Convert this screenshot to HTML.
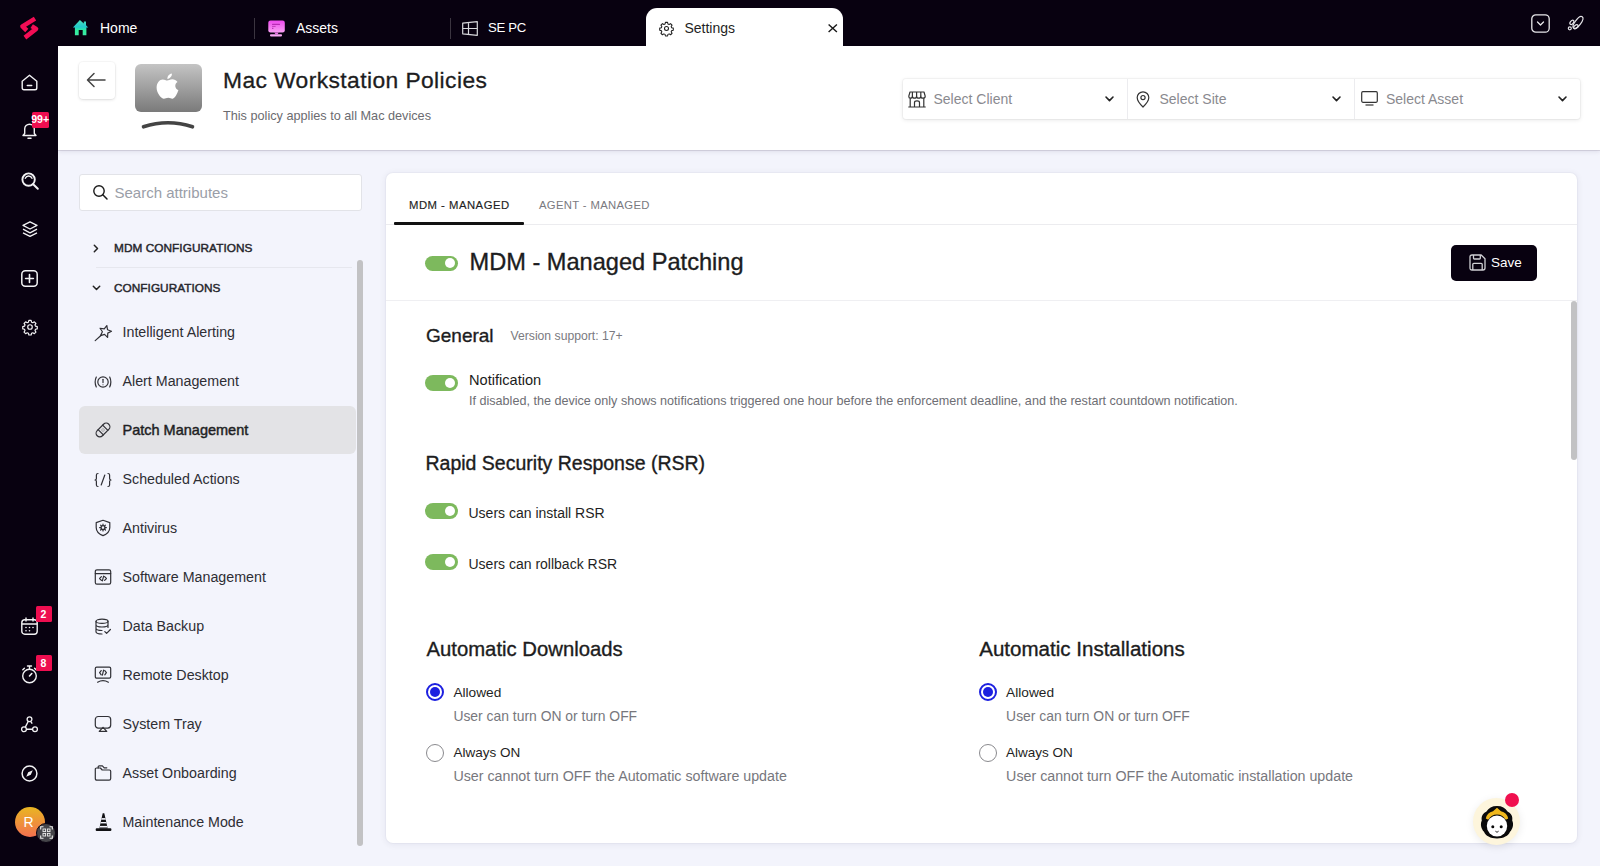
<!DOCTYPE html>
<html><head><meta charset="utf-8">
<style>
*{box-sizing:border-box;margin:0;padding:0}
html,body{width:1600px;height:866px;overflow:hidden;background:#f3f4fc;font-family:"Liberation Sans",sans-serif;color:#1f1f24}
.a{position:absolute}
.t{position:absolute;white-space:nowrap;line-height:1}
svg{position:absolute;overflow:visible}
#rail{left:0;top:0;width:58px;height:866px;background:#080110}
#top{left:0;top:0;width:1600px;height:46.5px;background:#080110}
#hdr{left:58px;top:46px;width:1542px;height:103.5px;background:#fff;box-shadow:0 1px 0 rgba(60,50,80,.13),0 2px 4px rgba(60,50,90,.10)}
</style></head><body>
<div id="top" class="a"></div>
<div id="rail" class="a"></div>
<div id="hdr" class="a"></div>

<!-- TOP BAR -->
<svg style="left:72px;top:19px" width="17" height="17" viewBox="0 0 17 17">
 <defs><linearGradient id="gh" x1="0" y1="0" x2="0" y2="1"><stop offset="0" stop-color="#4be0b8"/><stop offset="0.45" stop-color="#22c8cc"/><stop offset="0.7" stop-color="#2ff09a"/><stop offset="1" stop-color="#3ee8a8"/></linearGradient></defs>
 <path d="M7.9 1 L11.8 4.4 V2.6 H14 V6.3 L16.2 8.4 L14.4 8.4 L14.4 16.2 L10.7 16.2 L10.7 11 L6.7 11 L6.7 16.2 L2.9 16.2 L2.9 8.4 L0.9 8.4 Z" fill="url(#gh)"/>
</svg>
<div class="t" style="left:100px;top:21.4px;font-size:14px;color:#fff">Home</div>
<div class="a" style="left:254px;top:18px;width:1px;height:21px;background:#3b3540"></div>
<svg style="left:268px;top:19.5px" width="17" height="17" viewBox="0 0 17 17">
 <defs><linearGradient id="ga" x1="0" y1="0" x2="0" y2="1"><stop offset="0" stop-color="#ee48ee"/><stop offset="1" stop-color="#f8a0f2"/></linearGradient></defs>
 <rect x="0.3" y="0.5" width="16.5" height="12" rx="2.2" fill="url(#ga)"/>
 <rect x="4" y="3.7" width="8" height="1.4" rx=".5" fill="#b82cb4"/><rect x="4" y="5.9" width="3.6" height="1" fill="#c23cbc"/><rect x="4" y="7.8" width="1.4" height="1.1" fill="#b82cb4"/>
 <path d="M6.3 12.5 H10.7 L9.6 14.2 H7.4 Z" fill="#f070ec"/><rect x="2" y="14.2" width="12" height="2.2" rx=".8" fill="#f8a8f4"/>
</svg>
<div class="t" style="left:296px;top:21.4px;font-size:14px;color:#fff">Assets</div>
<div class="a" style="left:450px;top:18px;width:1px;height:21px;background:#3b3540"></div>
<svg style="left:462px;top:20.5px" width="16" height="15" viewBox="0 0 16 15">
 <path d="M0.7 2.2 L15.3 0.7 L15.3 14.3 L0.7 12.8 Z M0.7 7.5 H15.3 M6.5 1.6 V13.4" fill="none" stroke="#d8d8dc" stroke-width="1.2" stroke-linejoin="round"/>
</svg>
<div class="t" style="left:488px;top:21.4px;font-size:13.2px;color:#fff;letter-spacing:-0.35px">SE PC</div>
<div class="a" style="left:646px;top:8px;width:197px;height:39px;background:#fff;border-radius:11px 11px 0 0"></div>
<svg style="left:658.5px;top:21px" width="15" height="15" viewBox="0 0 24 24">
 <path d="M10.3 2.2h3.4l.6 2.6 1.9.8 2.3-1.4 2.4 2.4-1.4 2.3.8 1.9 2.6.6v3.4l-2.6.6-.8 1.9 1.4 2.3-2.4 2.4-2.3-1.4-1.9.8-.6 2.6h-3.4l-.6-2.6-1.9-.8-2.3 1.4-2.4-2.4 1.4-2.3-.8-1.9-2.6-.6v-3.4l2.6-.6.8-1.9-1.4-2.3 2.4-2.4 2.3 1.4 1.9-.8z" fill="none" stroke="#222" stroke-width="1.7" stroke-linejoin="round"/>
 <circle cx="12" cy="12" r="3.2" fill="none" stroke="#222" stroke-width="1.7"/>
</svg>
<div class="t" style="left:684.4px;top:20.9px;font-size:14px;color:#1f1f24">Settings</div>
<svg style="left:827.5px;top:24px" width="9.5" height="8.5" viewBox="0 0 9.5 8.5">
 <path d="M0.6 0.4 L8.9 8.1 M8.9 0.4 L0.6 8.1" stroke="#1a1a1a" stroke-width="1.4"/>
</svg>
<svg style="left:1531px;top:14px" width="19" height="19" viewBox="0 0 19 19">
 <rect x="0.8" y="0.8" width="17.4" height="17.4" rx="4" fill="none" stroke="#e8e8ea" stroke-width="1.3"/>
 <path d="M6.5 8 L9.5 11 L12.5 8" fill="none" stroke="#e8e8ea" stroke-width="1.3" stroke-linecap="round" stroke-linejoin="round"/>
</svg>
<svg style="left:1565px;top:13px" width="20" height="18" viewBox="0 0 20 18">
 <ellipse cx="13" cy="9.5" rx="7.2" ry="2.9" transform="rotate(-54 13 9.5)" fill="none" stroke="#e4e4e8" stroke-width="1.2"/>
 <ellipse cx="6.9" cy="9.3" rx="1.5" ry="2.5" transform="rotate(40 6.9 9.3)" fill="none" stroke="#e4e4e8" stroke-width="1.2"/>
 <ellipse cx="10.9" cy="13.7" rx="1.5" ry="2.5" transform="rotate(52 10.9 13.7)" fill="none" stroke="#e4e4e8" stroke-width="1.2"/>
 <circle cx="4.8" cy="15.3" r="1.5" fill="none" stroke="#e4e4e8" stroke-width="1.2"/>
</svg>


<!-- HEADER -->
<div class="a" style="left:78.5px;top:62px;width:36px;height:37px;background:#fff;border-radius:4px;box-shadow:0 1px 3px rgba(0,0,0,.12),0 0 0 1px rgba(0,0,0,.025)"></div>
<svg style="left:86px;top:72px" width="20" height="16" viewBox="0 0 20 16">
 <path d="M19 8 H1.6 M8 1.5 L1.5 8 L8 14.5" fill="none" stroke="#444" stroke-width="1.5" stroke-linecap="round" stroke-linejoin="round"/>
</svg>
<div class="a" style="left:134.5px;top:64px;width:67px;height:47.5px;border-radius:6px;background:linear-gradient(#c4c4c4,#7a7a7a)"></div>
<svg style="left:156px;top:72.5px" width="23" height="28" viewBox="0 0 23 28">
 <path d="M11.2 7.6 C12.6 7.6 13.9 6.3 16.4 6.3 C18.2 6.3 20.2 7.2 21.5 9 C18.3 10.8 18.6 15.6 22.4 17.1 C21.6 19.6 19.2 25.6 16.6 25.7 C15 25.8 14.4 24.8 12.3 24.8 C10.2 24.8 9.5 25.8 7.9 25.8 C5.3 25.8 0.6 20 0.6 14.8 C0.6 9.5 3.8 6.4 6.7 6.4 C8.7 6.4 9.9 7.6 11.2 7.6 Z" fill="#fff"/>
 <path d="M11.4 5.9 C11.2 3.4 13.3 0.9 15.9 0.6 C16.2 3.2 13.8 6 11.4 5.9 Z" fill="#fff"/>
</svg>
<svg style="left:141px;top:120px" width="54" height="9" viewBox="0 0 54 9">
 <path d="M2.5 6.8 Q27 -1.2 51.5 6.8" fill="none" stroke="#444" stroke-width="3.6" stroke-linecap="round"/>
</svg>
<div class="t" style="left:223px;top:68.5px;font-size:22.8px;letter-spacing:0.42px;color:#1c1c20;-webkit-text-stroke:0.3px #1c1c20">Mac Workstation Policies</div>
<div class="t" style="left:223px;top:110px;font-size:12.7px;color:#6b6b70">This policy applies to all Mac devices</div>

<div class="a" style="left:902.5px;top:79px;width:677px;height:40px;background:#fff;border-radius:3px;box-shadow:0 1px 4px rgba(0,0,0,.10),0 0 0 1px rgba(0,0,0,.03)"></div>
<div class="a" style="left:1127px;top:79px;width:1px;height:40px;background:#ececef"></div>
<div class="a" style="left:1353.5px;top:79px;width:1px;height:40px;background:#ececef"></div>
<svg style="left:907.5px;top:90.5px" width="18" height="17" viewBox="0 0 18 17">
 <path d="M2 1 H16 L17.2 5.2 Q17.2 7.2 14.9 7.2 Q12.8 7.2 12.8 5.2 Q12.8 7.2 10.7 7.2 Q8.6 7.2 8.6 5.2 Q8.6 7.2 6.5 7.2 Q4.4 7.2 4.4 5.2 Q4.4 7.2 2.2 7.2 Q0.8 7.2 0.8 5.2 Z" fill="none" stroke="#333" stroke-width="1.2" stroke-linejoin="round"/>
 <path d="M2.2 7.2 V16 M15.8 7.2 V16 M0.3 16 H17.7 M6.5 16 V11.5 Q6.5 9.8 9 9.8 Q11.5 9.8 11.5 11.5 V16 M4.4 1 V5.2 M8.6 1 V5.2 M12.8 1 V5.2" fill="none" stroke="#333" stroke-width="1.2"/>
</svg>
<div class="t" style="left:933.5px;top:91.9px;font-size:14px;color:#8a8a8f">Select Client</div>
<svg style="left:1105px;top:96px" width="9" height="6" viewBox="0 0 9 6"><path d="M1 1 L4.5 4.6 L8 1" fill="none" stroke="#222" stroke-width="1.6" stroke-linecap="round" stroke-linejoin="round"/></svg>
<svg style="left:1136px;top:90.5px" width="14" height="17" viewBox="0 0 14 17">
 <path d="M7 16 C7 16 12.8 10.6 12.8 6.6 A5.8 5.8 0 0 0 1.2 6.6 C1.2 10.6 7 16 7 16 Z" fill="none" stroke="#333" stroke-width="1.2" stroke-linejoin="round"/>
 <circle cx="7" cy="6.6" r="2.1" fill="none" stroke="#333" stroke-width="1.2"/>
</svg>
<div class="t" style="left:1159.5px;top:91.9px;font-size:14px;color:#8a8a8f">Select Site</div>
<svg style="left:1331.5px;top:96px" width="9" height="6" viewBox="0 0 9 6"><path d="M1 1 L4.5 4.6 L8 1" fill="none" stroke="#222" stroke-width="1.6" stroke-linecap="round" stroke-linejoin="round"/></svg>
<svg style="left:1361px;top:91px" width="17" height="15" viewBox="0 0 17 15">
 <rect x="0.7" y="0.7" width="15.6" height="10.6" rx="1.2" fill="none" stroke="#333" stroke-width="1.2"/>
 <path d="M4.5 14 H12.5" stroke="#333" stroke-width="1.2"/>
</svg>
<div class="t" style="left:1386px;top:91.9px;font-size:14px;color:#8a8a8f">Select Asset</div>
<svg style="left:1558px;top:96px" width="9" height="6" viewBox="0 0 9 6"><path d="M1 1 L4.5 4.6 L8 1" fill="none" stroke="#222" stroke-width="1.6" stroke-linecap="round" stroke-linejoin="round"/></svg>


<!-- LEFT PANEL -->
<div class="a" style="left:78.5px;top:174px;width:283.5px;height:36.5px;background:#fff;border:1px solid #e2e3e8;border-radius:3px"></div>
<svg style="left:92.5px;top:185px" width="15" height="15" viewBox="0 0 15 15">
 <circle cx="6" cy="6" r="5.2" fill="none" stroke="#1a1a1a" stroke-width="1.4"/>
 <path d="M9.8 9.8 L14 14" stroke="#1a1a1a" stroke-width="1.5" stroke-linecap="round"/>
</svg>
<div class="t" style="left:114.5px;top:184.6px;font-size:15px;color:#9a9ea8">Search attributes</div>
<svg style="left:92.5px;top:244px" width="6" height="9" viewBox="0 0 6 9"><path d="M1.3 1.3 L4.5 4.5 L1.3 7.7" fill="none" stroke="#222" stroke-width="1.5" stroke-linecap="round" stroke-linejoin="round"/></svg>
<div class="t" style="left:114px;top:243px;font-size:11.8px;color:#26262c;-webkit-text-stroke:0.45px #26262c;letter-spacing:0.06px">MDM CONFIGURATIONS</div>
<div class="a" style="left:96px;top:267px;width:256px;height:1px;background:#e6e7ee"></div>
<svg style="left:91.5px;top:285px" width="9" height="6" viewBox="0 0 9 6"><path d="M1.3 1.3 L4.5 4.5 L7.7 1.3" fill="none" stroke="#222" stroke-width="1.5" stroke-linecap="round" stroke-linejoin="round"/></svg>
<div class="t" style="left:114px;top:282.8px;font-size:11.8px;color:#26262c;-webkit-text-stroke:0.45px #26262c;letter-spacing:0.04px">CONFIGURATIONS</div>
<div class="a" style="left:357px;top:260px;width:5.5px;height:586px;background:#c2c2c4;border-radius:3px"></div>
<div class="a" style="left:79px;top:406px;width:277px;height:48px;background:#e3e3e6;border-radius:6px"></div>
<div class="t" style="left:122.5px;top:325.23px;font-size:14.25px;color:#2e2e34">Intelligent Alerting</div>
<div class="t" style="left:122.5px;top:374.18px;font-size:14.25px;color:#2e2e34">Alert Management</div>
<div class="t" style="left:122.5px;top:422.92px;font-size:14.5px;color:#1f1f24;-webkit-text-stroke:0.45px #1f1f24">Patch Management</div>
<div class="t" style="left:122.5px;top:472.08px;font-size:14.25px;color:#2e2e34">Scheduled Actions</div>
<div class="t" style="left:122.5px;top:521.03px;font-size:14.25px;color:#2e2e34">Antivirus</div>
<div class="t" style="left:122.5px;top:569.98px;font-size:14.25px;color:#2e2e34">Software Management</div>
<div class="t" style="left:122.5px;top:618.93px;font-size:14.25px;color:#2e2e34">Data Backup</div>
<div class="t" style="left:122.5px;top:667.88px;font-size:14.25px;color:#2e2e34">Remote Desktop</div>
<div class="t" style="left:122.5px;top:716.83px;font-size:14.25px;color:#2e2e34">System Tray</div>
<div class="t" style="left:122.5px;top:765.78px;font-size:14.25px;color:#2e2e34">Asset Onboarding</div>
<div class="t" style="left:122.5px;top:814.73px;font-size:14.25px;color:#2e2e34">Maintenance Mode</div>


<!-- MENU ICONS -->
<svg style="left:93.5px;top:324px" width="18" height="18" viewBox="0 0 18 18"><path d="M12.83 1.59 L13.53 5.75 L17.49 7.20 L13.75 9.15 L13.59 13.36 L10.58 10.41 L6.53 11.56 L8.41 7.79 L6.06 4.28 L10.23 4.91 Z" fill="none" stroke="#303036" stroke-width="1.2" stroke-linecap="round" stroke-linejoin="round"/><path d="M7.2 11.2 L1.2 16.6" fill="none" stroke="#303036" stroke-width="1.2" stroke-linecap="round" stroke-linejoin="round"/></svg>
<svg style="left:93.5px;top:372.5px" width="18" height="18" viewBox="0 0 18 18"><circle cx="9" cy="9" r="5.2" fill="none" stroke="#303036" stroke-width="1.2" stroke-linecap="round" stroke-linejoin="round"/><path d="M9 6.3 V9.6" fill="none" stroke="#303036" stroke-width="1.2" stroke-linecap="round" stroke-linejoin="round"/><circle cx="9" cy="11.7" r=".55" fill="#303036"/><path d="M2.3 4 Q0 9 2.3 14 M15.7 4 Q18 9 15.7 14" fill="none" stroke="#303036" stroke-width="1.2" stroke-linecap="round" stroke-linejoin="round"/></svg>
<svg style="left:93.5px;top:421px" width="18" height="18" viewBox="0 0 18 18"><g transform="rotate(-45 9 9)"><rect x="0.8" y="5.3" width="16.4" height="7.4" rx="3.7" fill="none" stroke="#303036" stroke-width="1.2" stroke-linecap="round" stroke-linejoin="round"/><path d="M5.8 5.3 V12.7 M12.2 5.3 V12.7" fill="none" stroke="#303036" stroke-width="1.2" stroke-linecap="round" stroke-linejoin="round"/><circle cx="8.2" cy="8.2" r=".45" fill="#303036"/><circle cx="9.8" cy="9.8" r=".45" fill="#303036"/><circle cx="9.8" cy="8.2" r=".45" fill="#303036"/><circle cx="8.2" cy="9.8" r=".45" fill="#303036"/></g></svg>
<svg style="left:93.5px;top:470.5px" width="18" height="18" viewBox="0 0 18 18"><path d="M4 2.5 Q2.4 2.5 2.4 4 V7.6 Q2.4 9 1 9 Q2.4 9 2.4 10.4 V14 Q2.4 15.5 4 15.5 M14 2.5 Q15.6 2.5 15.6 4 V7.6 Q15.6 9 17 9 Q15.6 9 15.6 10.4 V14 Q15.6 15.5 14 15.5 M10.8 4 L7.2 14" fill="none" stroke="#303036" stroke-width="1.2" stroke-linecap="round" stroke-linejoin="round"/></svg>
<svg style="left:93.5px;top:519.4px" width="18" height="18" viewBox="0 0 18 18"><path d="M9 1.3 L15.8 3.6 V8.4 Q15.8 13.8 9 16.6 Q2.2 13.8 2.2 8.4 V3.6 Z" fill="none" stroke="#303036" stroke-width="1.2" stroke-linecap="round" stroke-linejoin="round"/><circle cx="9" cy="8.6" r="2" fill="none" stroke="#303036" stroke-width="1.2" stroke-linecap="round" stroke-linejoin="round"/><path d="M9 5.2 V6.6 M9 10.6 V12 M5.6 8.6 H7 M11 8.6 H12.4 M6.6 6.2 L7.6 7.2 M10.4 10 L11.4 11 M11.4 6.2 L10.4 7.2 M7.6 10 L6.6 11" fill="none" stroke="#303036" stroke-width="1.2" stroke-linecap="round" stroke-linejoin="round"/></svg>
<svg style="left:93.5px;top:568.3px" width="18" height="18" viewBox="0 0 18 18"><rect x="1.3" y="1.8" width="15.4" height="14.4" rx="1.6" fill="none" stroke="#303036" stroke-width="1.2" stroke-linecap="round" stroke-linejoin="round"/><path d="M1.3 5.6 H16.7 M7.4 8.6 L5.6 10.5 L7.4 12.4 M10.6 8.6 L12.4 10.5 L10.6 12.4 M9.6 8.2 L8.4 12.8" fill="none" stroke="#303036" stroke-width="1.2" stroke-linecap="round" stroke-linejoin="round"/></svg>
<svg style="left:93.5px;top:617.7px" width="18" height="18" viewBox="0 0 18 18"><ellipse cx="8" cy="3.3" rx="6" ry="2.1" fill="none" stroke="#303036" stroke-width="1.2" stroke-linecap="round" stroke-linejoin="round"/><path d="M2 3.3 V13.8 Q2 16 8 16 M14 3.3 V9.5 M2 6.8 Q2 9 8 9 Q14 9 14 6.8 M2 10.3 Q2 12.5 8 12.5" fill="none" stroke="#303036" stroke-width="1.2" stroke-linecap="round" stroke-linejoin="round"/><path d="M10.8 13.6 L12.6 15.3 L16.4 11.5" fill="none" stroke="#303036" stroke-width="1.2" stroke-linecap="round" stroke-linejoin="round"/></svg>
<svg style="left:93.5px;top:665.7px" width="18" height="18" viewBox="0 0 18 18"><rect x="1.3" y="1.2" width="15.4" height="11" rx="1.4" fill="none" stroke="#303036" stroke-width="1.2" stroke-linecap="round" stroke-linejoin="round"/><path d="M7.2 4.6 L5.6 6.7 L7.2 8.8 M10.8 4.6 L12.4 6.7 L10.8 8.8 M9.6 4.2 L8.4 9.2 M3.6 16.2 Q9 13.2 14.4 16.2" fill="none" stroke="#303036" stroke-width="1.2" stroke-linecap="round" stroke-linejoin="round"/></svg>
<svg style="left:93.5px;top:715.2px" width="18" height="18" viewBox="0 0 18 18"><rect x="1.3" y="1.5" width="15.4" height="11.6" rx="3" fill="none" stroke="#303036" stroke-width="1.2" stroke-linecap="round" stroke-linejoin="round"/><path d="M5.2 16.3 L9 12.3 L12.8 16.3 Z" fill="#fff" stroke="#303036" stroke-width="1.2" stroke-linecap="round" stroke-linejoin="round"/></svg>
<svg style="left:93.5px;top:764.2px" width="18" height="18" viewBox="0 0 18 18"><path d="M1.3 14.6 V5.2 Q1.3 4 2.5 4 H6.4 L8.2 6 H15.4 Q16.7 6 16.7 7.3 V14.6 Q16.7 16.2 15.1 16.2 H2.9 Q1.3 16.2 1.3 14.6 Z" fill="none" stroke="#303036" stroke-width="1.2" stroke-linecap="round" stroke-linejoin="round"/><path d="M4.2 4 V2.8 Q4.2 1.8 5.2 1.8 H8.4 L10.2 3.8 H12.8" fill="none" stroke="#303036" stroke-width="1.2" stroke-linecap="round" stroke-linejoin="round"/></svg>
<svg style="left:93.5px;top:812.7px" width="18" height="18" viewBox="0 0 18 18"><defs><clipPath id="cone"><path d="M8.7 0.2 H10.3 L13.7 15.6 H5.3 Z"/></clipPath></defs><g clip-path="url(#cone)"><rect x="0" y="0" width="18" height="16" fill="#111114"/><rect x="0" y="5.1" width="18" height="1.6" fill="#f3f4fc"/><rect x="0" y="9" width="18" height="1.4" fill="#f3f4fc"/><rect x="0" y="12.9" width="18" height="1.6" fill="#f3f4fc"/></g><rect x="1.7" y="15.3" width="15.7" height="2.6" rx="1" fill="#111114"/></svg>


<!-- CARD -->
<div class="a" style="left:385.5px;top:172.5px;width:1191.5px;height:670px;background:#fff;border-radius:7px;box-shadow:0 0 0 1px rgba(20,20,60,.025),0 1px 6px 1px rgba(20,20,60,.06)"></div>
<div class="t" style="left:409px;top:199.88px;font-size:11.3px;color:#1f1f24;letter-spacing:0.5px;-webkit-text-stroke:0.15px #1f1f24">MDM - MANAGED</div>
<div class="t" style="left:539px;top:199.88px;font-size:11.3px;color:#7a7a80;letter-spacing:0.33px">AGENT - MANAGED</div>
<div class="a" style="left:385.5px;top:224px;width:1191.5px;height:1px;background:#ececef"></div>
<div class="a" style="left:394px;top:222px;width:130px;height:2.5px;background:#111;border-radius:1px"></div>
<div class="a" style="left:425px;top:255.5px;width:33px;height:15.5px;border-radius:8px;background:#7db95d"></div>
<div class="a" style="left:444.5px;top:258.25px;width:10px;height:10px;border-radius:50%;background:#fff"></div>
<div class="t" style="left:469.5px;top:251.02px;font-size:23.6px;color:#1c1c20;-webkit-text-stroke:0.35px currentColor;">MDM - Managed Patching</div>
<div class="a" style="left:1451px;top:244.5px;width:86px;height:36px;background:#080110;border-radius:5px"></div>
<svg style="left:1468.5px;top:254px" width="17" height="17" viewBox="0 0 17 17">
 <path d="M1 3 Q1 1 3 1 H12.2 L16 4.8 V14 Q16 16 14 16 H3 Q1 16 1 14 Z" fill="none" stroke="#d0d0d4" stroke-width="1.3" stroke-linejoin="round"/>
 <path d="M4.5 1 V4.2 Q4.5 5 5.3 5 H10.5 Q11.3 5 11.3 4.2 V1 M3.8 16 V10.3 Q3.8 9.3 4.8 9.3 H12.2 Q13.2 9.3 13.2 10.3 V16" fill="none" stroke="#d0d0d4" stroke-width="1.3"/>
</svg>
<div class="t" style="left:1491px;top:255.57px;font-size:13.5px;color:#fff;">Save</div>
<div class="a" style="left:385.5px;top:300px;width:1191.5px;height:1px;background:#efeff2"></div>
<div class="a" style="left:1571px;top:301px;width:5.5px;height:159px;background:#c2c2c4;border-radius:3px"></div>
<div class="t" style="left:426px;top:326.11px;font-size:19px;color:#1c1c20;-webkit-text-stroke:0.35px currentColor;">General</div>
<div class="t" style="left:510.5px;top:329.67px;font-size:12.2px;color:#7a7a80;">Version support: 17+</div>
<div class="a" style="left:425px;top:375.2px;width:33px;height:15.5px;border-radius:8px;background:#7db95d"></div>
<div class="a" style="left:444.5px;top:377.95px;width:10px;height:10px;border-radius:50%;background:#fff"></div>
<div class="t" style="left:469px;top:372.94px;font-size:14.6px;color:#1c1c20;">Notification</div>
<div class="t" style="left:469px;top:395.13px;font-size:12.6px;color:#6e6e74;">If disabled, the device only shows notifications triggered one hour before the enforcement deadline, and the restart countdown notification.</div>
<div class="t" style="left:425.5px;top:453.89px;font-size:19.5px;color:#1c1c20;-webkit-text-stroke:0.35px currentColor;">Rapid Security Response (RSR)</div>
<div class="a" style="left:425px;top:503px;width:33px;height:15.5px;border-radius:8px;background:#7db95d"></div>
<div class="a" style="left:444.5px;top:505.75px;width:10px;height:10px;border-radius:50%;background:#fff"></div>
<div class="t" style="left:468.5px;top:505.65px;font-size:14px;color:#1f1f24;">Users can install RSR</div>
<div class="a" style="left:425px;top:554px;width:33px;height:15.5px;border-radius:8px;background:#7db95d"></div>
<div class="a" style="left:444.5px;top:556.75px;width:10px;height:10px;border-radius:50%;background:#fff"></div>
<div class="t" style="left:468.5px;top:556.65px;font-size:14px;color:#1f1f24;">Users can rollback RSR</div>
<div class="t" style="left:426.5px;top:638.81px;font-size:20.3px;color:#1c1c20;-webkit-text-stroke:0.35px currentColor;">Automatic Downloads</div>
<div class="a" style="left:425.8px;top:683px;width:18px;height:18px;border-radius:50%;border:2px solid #1d20e0;background:#fff"></div>
<div class="a" style="left:429.8px;top:687px;width:10px;height:10px;border-radius:50%;background:#1d20e0"></div>
<div class="t" style="left:453.4px;top:685.9px;font-size:13.7px;color:#1f1f24;">Allowed</div>
<div class="t" style="left:453.4px;top:710.03px;font-size:13.9px;color:#77777d;">User can turn ON or turn OFF</div>
<div class="a" style="left:425.8px;top:744px;width:18px;height:18px;border-radius:50%;border:1.5px solid #8a8a8e;background:#fff"></div>
<div class="t" style="left:453.4px;top:746.07px;font-size:13.5px;color:#1f1f24;">Always ON</div>
<div class="t" style="left:453.4px;top:768.53px;font-size:14.25px;color:#77777d;">User cannot turn OFF the Automatic software update</div>
<div class="t" style="left:979.2px;top:638.60px;font-size:20.55px;color:#1c1c20;-webkit-text-stroke:0.35px currentColor;">Automatic Installations</div>
<div class="a" style="left:978.5px;top:683px;width:18px;height:18px;border-radius:50%;border:2px solid #1d20e0;background:#fff"></div>
<div class="a" style="left:982.5px;top:687px;width:10px;height:10px;border-radius:50%;background:#1d20e0"></div>
<div class="t" style="left:1006.1px;top:685.9px;font-size:13.7px;color:#1f1f24;">Allowed</div>
<div class="t" style="left:1006.1px;top:710.03px;font-size:13.9px;color:#77777d;">User can turn ON or turn OFF</div>
<div class="a" style="left:978.5px;top:744px;width:18px;height:18px;border-radius:50%;border:1.5px solid #8a8a8e;background:#fff"></div>
<div class="t" style="left:1006.1px;top:746.07px;font-size:13.5px;color:#1f1f24;">Always ON</div>
<div class="t" style="left:1006.1px;top:768.53px;font-size:14.25px;color:#77777d;">User cannot turn OFF the Automatic installation update</div>
<div class="a" style="left:1473px;top:797.5px;width:47px;height:47px;border-radius:50%;background:#fdf5dc;box-shadow:0 2px 8px rgba(0,0,0,.08)"></div>
<svg style="left:1478px;top:803px" width="38" height="38" viewBox="0 0 38 38">
 <path d="M19 3 C24 3 27.5 5 29.5 8.5 C33 10 35 13.5 34.2 17.5 C36 21 34.8 26 32 28.8 C30.5 32.8 25.5 35.5 19 35.5 C12.5 35.5 7.5 32.8 6 28.8 C3.2 26 2 21 3.8 17.5 C3 13.5 5 10 8.5 8.5 C10.5 5 14 3 19 3 Z" fill="#0a0a0a"/>
 <path d="M7.8 15.5 Q9 9.5 15 8.2 L19 4.8 L23 8.2 Q29 9.5 30.2 15.5 L27.8 16.8 Q24.5 11.5 19 11.5 Q13.5 11.5 10.2 16.8 Z" fill="#f0b81c"/>
 <ellipse cx="19" cy="23" rx="10.2" ry="10.6" fill="#fff"/>
 <circle cx="14.8" cy="23.8" r="1.5" fill="#0a0a0a"/><circle cx="23.2" cy="23.8" r="1.5" fill="#0a0a0a"/>
 <path d="M17.4 28.2 L19 29.3 L20.6 28.2" fill="none" stroke="#0a0a0a" stroke-width="0.9"/>
</svg>
<div class="a" style="left:1504.5px;top:793px;width:14px;height:14px;border-radius:50%;background:#f0104f"></div>

<!-- RAIL -->
<svg style="left:17px;top:14px" width="26" height="28" viewBox="0 0 26 28">
 <path d="M18 4.6 L5.4 12.4 L9.8 16.5" fill="none" stroke="#f30d55" stroke-width="4.5" stroke-linejoin="round"/>
 <path d="M14.7 12.1 L19.1 14.9 L7.9 23.6" fill="none" stroke="#f30d55" stroke-width="4.5" stroke-linejoin="round"/>
</svg>
<svg style="left:21px;top:74px" width="17" height="17" viewBox="0 0 17 17">
 <path d="M1.2 7.2 L8.5 1.2 L15.8 7.2 V14 Q15.8 15.8 14 15.8 H3 Q1.2 15.8 1.2 14 Z" fill="none" stroke="#f2f2f4" stroke-width="1.4" stroke-linejoin="round"/>
 <path d="M6.3 11.6 H10.7" stroke="#f2f2f4" stroke-width="1.5" stroke-linecap="round"/>
</svg>
<svg style="left:22px;top:122px" width="15" height="18" viewBox="0 0 15 18">
 <path d="M1 13.5 H14 L12.3 11.5 V7 A4.8 4.8 0 0 0 2.7 7 V11.5 Z" fill="none" stroke="#f2f2f4" stroke-width="1.4" stroke-linejoin="round"/>
 <path d="M6 16.3 H9" stroke="#f2f2f4" stroke-width="1.5" stroke-linecap="round"/>
</svg>
<div class="a" style="left:32px;top:111.5px;width:17px;height:16px;background:#ee0e50;border-radius:1.5px"></div>
<div class="t" style="left:31.3px;top:113.5px;font-size:10.6px;font-weight:bold;color:#fff;letter-spacing:-0.1px">99+</div>
<svg style="left:21px;top:172px" width="18" height="18" viewBox="0 0 18 18">
 <circle cx="7.6" cy="7.6" r="6.2" fill="none" stroke="#f2f2f4" stroke-width="1.9"/>
 <path d="M12.2 12.2 L16.8 16.8" stroke="#f2f2f4" stroke-width="2" stroke-linecap="round"/>
 <path d="M4.3 6.3 A3.6 3.6 0 0 1 11 6.3" fill="none" stroke="#f2f2f4" stroke-width="1.4" stroke-linecap="round"/>
</svg>
<svg style="left:21.5px;top:221px" width="16" height="16" viewBox="0 0 16 16">
 <path d="M8 0.8 L15 4.4 L8 8 L1 4.4 Z" fill="none" stroke="#f2f2f4" stroke-width="1.3" stroke-linejoin="round"/>
 <path d="M1 8.2 L8 11.8 L15 8.2 M1 11.8 L8 15.3 L15 11.8" fill="none" stroke="#f2f2f4" stroke-width="1.3" stroke-linejoin="round"/>
</svg>
<svg style="left:21px;top:270px" width="17" height="17" viewBox="0 0 17 17">
 <rect x="0.8" y="0.8" width="15.4" height="15.4" rx="3.5" fill="none" stroke="#f2f2f4" stroke-width="1.5"/>
 <path d="M8.5 4.6 V12.4 M4.6 8.5 H12.4" stroke="#f2f2f4" stroke-width="1.6" stroke-linecap="round"/>
</svg>
<svg style="left:21.5px;top:319px" width="16" height="16" viewBox="0 0 24 24">
 <path d="M10.3 2.2h3.4l.6 2.6 1.9.8 2.3-1.4 2.4 2.4-1.4 2.3.8 1.9 2.6.6v3.4l-2.6.6-.8 1.9 1.4 2.3-2.4 2.4-2.3-1.4-1.9.8-.6 2.6h-3.4l-.6-2.6-1.9-.8-2.3 1.4-2.4-2.4 1.4-2.3-.8-1.9-2.6-.6v-3.4l2.6-.6.8-1.9-1.4-2.3 2.4-2.4 2.3 1.4 1.9-.8z" fill="none" stroke="#f2f2f4" stroke-width="1.8" stroke-linejoin="round"/>
 <circle cx="12" cy="12" r="3.4" fill="none" stroke="#f2f2f4" stroke-width="1.8"/>
</svg>
<svg style="left:21px;top:617px" width="17" height="18" viewBox="0 0 17 18">
 <rect x="0.8" y="2.8" width="15.4" height="14.4" rx="3" fill="none" stroke="#f2f2f4" stroke-width="1.4"/>
 <path d="M0.8 7 H16.2 M5 0.6 V4.5 M12 0.6 V4.5" stroke="#f2f2f4" stroke-width="1.4"/>
 <circle cx="5" cy="10.5" r=".8" fill="#f2f2f4"/><circle cx="8.5" cy="10.5" r=".8" fill="#f2f2f4"/><circle cx="12" cy="10.5" r=".8" fill="#f2f2f4"/>
 <circle cx="5" cy="13.7" r=".8" fill="#f2f2f4"/><circle cx="8.5" cy="13.7" r=".8" fill="#f2f2f4"/>
</svg>
<div class="a" style="left:36px;top:606px;width:15.5px;height:16px;background:#ee0e50;border-radius:1.5px"></div>
<div class="t" style="left:40.5px;top:609px;font-size:10.5px;font-weight:bold;color:#fff">2</div>
<svg style="left:21px;top:665px" width="17" height="19" viewBox="0 0 17 19">
 <circle cx="8.5" cy="11" r="6.8" fill="none" stroke="#f2f2f4" stroke-width="1.4"/>
 <path d="M6.5 1 H10.5 M8.5 1 V4.2 M1.8 4.8 L3.4 3.2 M15.2 4.8 L13.6 3.2" stroke="#f2f2f4" stroke-width="1.4" stroke-linecap="round"/>
 <path d="M8.5 11 L10.8 8.5" stroke="#f2f2f4" stroke-width="1.6" stroke-linecap="round"/>
</svg>
<div class="a" style="left:36px;top:655px;width:15.5px;height:16px;background:#ee0e50;border-radius:1.5px"></div>
<div class="t" style="left:40.5px;top:658px;font-size:10.5px;font-weight:bold;color:#fff">8</div>
<svg style="left:21px;top:716px" width="17" height="17" viewBox="0 0 17 17">
 <circle cx="8.5" cy="3.2" r="2.4" fill="none" stroke="#f2f2f4" stroke-width="1.3"/>
 <circle cx="3" cy="13.3" r="2.4" fill="none" stroke="#f2f2f4" stroke-width="1.3"/>
 <circle cx="14" cy="13.3" r="2.4" fill="none" stroke="#f2f2f4" stroke-width="1.3"/>
 <path d="M7.3 5.3 L4.3 11.1 M9.7 5.3 L11.2 7.6 M6 13.3 H11" stroke="#f2f2f4" stroke-width="1.4"/>
</svg>
<svg style="left:21px;top:765px" width="17" height="17" viewBox="0 0 17 17">
 <circle cx="8.5" cy="8.5" r="7.4" fill="none" stroke="#f2f2f4" stroke-width="1.5"/>
 <path d="M11.8 5.2 L9.8 9.8 L5.2 11.8 L7.2 7.2 Z" fill="#f2f2f4"/>
</svg>
<div class="a" style="left:14.5px;top:807px;width:30px;height:30px;border-radius:50%;background:linear-gradient(#e9b622,#f3704f)"></div>
<div class="t" style="left:23.5px;top:815px;font-size:14px;color:#fff">R</div>
<div class="a" style="left:36px;top:822.5px;width:20px;height:20px;border-radius:50%;background:#45454a;border:1px solid #080110"></div>
<svg style="left:39.5px;top:826px" width="13" height="13" viewBox="0 0 13 13">
 <path d="M0.7 3.5 V0.7 H3.5 M9.5 0.7 H12.3 V3.5 M12.3 9.5 V12.3 H9.5 M3.5 12.3 H0.7 V9.5" fill="none" stroke="#eee" stroke-width="1.1"/>
 <rect x="3" y="3" width="2.6" height="2.6" fill="none" stroke="#eee" stroke-width="0.9"/><rect x="7.4" y="3" width="2.6" height="2.6" fill="none" stroke="#eee" stroke-width="0.9"/>
 <rect x="3" y="7.4" width="2.6" height="2.6" fill="none" stroke="#eee" stroke-width="0.9"/><rect x="7.4" y="7.4" width="2.6" height="2.6" fill="none" stroke="#eee" stroke-width="0.9"/>
</svg>

</body></html>
